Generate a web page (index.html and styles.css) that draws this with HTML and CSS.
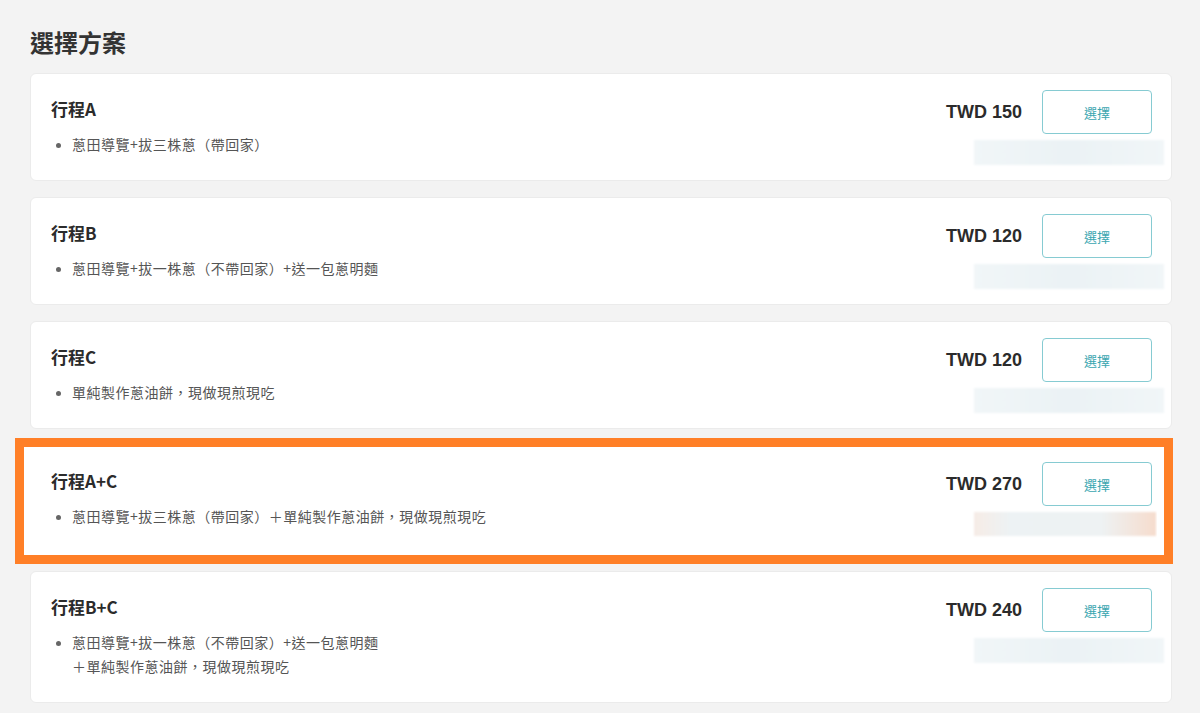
FILE: index.html
```html
<!DOCTYPE html>
<html lang="zh-Hant">
 <head>
    <meta charset="utf-8">
    <title>選擇方案</title>
    <link rel="stylesheet" href="styles.css">
 </head>
 <body>
    <h2 class="page-title">選擇方案</h2>

    <div class="plans">
        <div class="plan">
            <div class="plan-info">
                <h3 class="plan-name">行程A</h3>
                <ul class="plan-items">
                    <li>蔥田導覽+拔三株蔥（帶回家）</li>
                </ul>
            </div>
            <div class="plan-side">
                <div class="plan-buy">
                    <span class="price">TWD 150</span>
                    <button class="pick">選擇</button>
                </div>
                <div class="masked"></div>
            </div>
        </div>

        <div class="plan">
            <div class="plan-info">
                <h3 class="plan-name">行程B</h3>
                <ul class="plan-items">
                    <li>蔥田導覽+拔一株蔥（不帶回家）+送一包蔥明麵</li>
                </ul>
            </div>
            <div class="plan-side">
                <div class="plan-buy">
                    <span class="price">TWD 120</span>
                    <button class="pick">選擇</button>
                </div>
                <div class="masked"></div>
            </div>
        </div>

        <div class="plan">
            <div class="plan-info">
                <h3 class="plan-name">行程C</h3>
                <ul class="plan-items">
                    <li>單純製作蔥油餅，現做現煎現吃</li>
                </ul>
            </div>
            <div class="plan-side">
                <div class="plan-buy">
                    <span class="price">TWD 120</span>
                    <button class="pick">選擇</button>
                </div>
                <div class="masked"></div>
            </div>
        </div>

        <div class="plan plan-marked">
            <div class="plan-info">
                <h3 class="plan-name">行程A+C</h3>
                <ul class="plan-items">
                    <li>蔥田導覽+拔三株蔥（帶回家）＋單純製作蔥油餅，現做現煎現吃</li>
                </ul>
            </div>
            <div class="plan-side">
                <div class="plan-buy">
                    <span class="price">TWD 270</span>
                    <button class="pick">選擇</button>
                </div>
                <div class="masked masked-warm"></div>
            </div>
            <div class="marker"></div>
        </div>

        <div class="plan">
            <div class="plan-info">
                <h3 class="plan-name">行程B+C</h3>
                <ul class="plan-items">
                    <li>蔥田導覽+拔一株蔥（不帶回家）+送一包蔥明麵<br>＋單純製作蔥油餅，現做現煎現吃</li>
                </ul>
            </div>
            <div class="plan-side">
                <div class="plan-buy">
                    <span class="price">TWD 240</span>
                    <button class="pick">選擇</button>
                </div>
                <div class="masked"></div>
            </div>
        </div>
    </div>
 </body>
</html>
```

FILE: styles.css
```css
html, body {
    margin: 0;
    padding: 0;
}

body {
    background-color: #f3f3f3;
    padding: 30px 28px 0 30px;
    font-family: "Noto Sans CJK TC", "Noto Sans", sans-serif;
    color: #333;
}

.page-title {
    margin: 0 0 19px 0;
    font-size: 24px;
    line-height: 24px;
    font-weight: 700;
    color: #333;
}

.plans {
    display: flex;
    flex-direction: column;
    gap: 16px;
}

.plan {
    position: relative;
    display: flex;
    justify-content: space-between;
    padding: 16px 19px 15px 20px;
    background: #fff;
    border: 1px solid #ebebeb;
    border-radius: 6px;
}

.plan-marked {
    padding-bottom: 17px;
}

.plan-info {
    padding: 7px 0 9px 0;
}

.plan-name {
    margin: 0;
    font-size: 17px;
    line-height: 24px;
    font-weight: 700;
    color: #2b2b2b;
}

.plan-items {
    margin: 11px 0 0 0;
    padding-left: 21px;
    font-size: 14px;
    line-height: 24px;
    letter-spacing: 0.5px;
    color: #555;
}

.plan-items li::marker {
    color: #666;
    font-size: 12px;
}

.plan-side {
    display: flex;
    flex-direction: column;
    align-items: flex-end;
    gap: 6px;
}

.plan-buy {
    display: flex;
    align-items: center;
    gap: 20px;
}

.price {
    font-family: "Liberation Sans", Arial, sans-serif;
    font-size: 18px;
    font-weight: 700;
    color: #2b2b2b;
}

.pick {
    width: 110px;
    height: 44px;
    background: #fff;
    border: 1px solid #86cbd2;
    border-radius: 4px;
    color: #3aa6b0;
    font-family: "Noto Sans CJK TC", sans-serif;
    font-size: 13px;
    cursor: pointer;
}

/* blurred area (redacted in the screenshot) */
.masked {
    width: 190px;
    height: 25px;
    margin-right: -12px;
    background: linear-gradient(90deg, #f1f6f8, #ebf2f5 50%, #f1f6f8);
    filter: blur(1px);
}

.masked-warm {
    width: 182px;
    height: 24px;
    margin-right: -4px;
    background: linear-gradient(90deg, #f6ece6, #edf2f4 20%, #eef2f3 70%, #f6dccd);
}

/* orange highlight frame */
.marker {
    position: absolute;
    top: -8px;
    left: -16px;
    right: -2px;
    bottom: -10px;
    border: 9px solid #ff7f27;
    box-shadow: inset 0 0 0 7px #fff;
    pointer-events: none;
}
```
